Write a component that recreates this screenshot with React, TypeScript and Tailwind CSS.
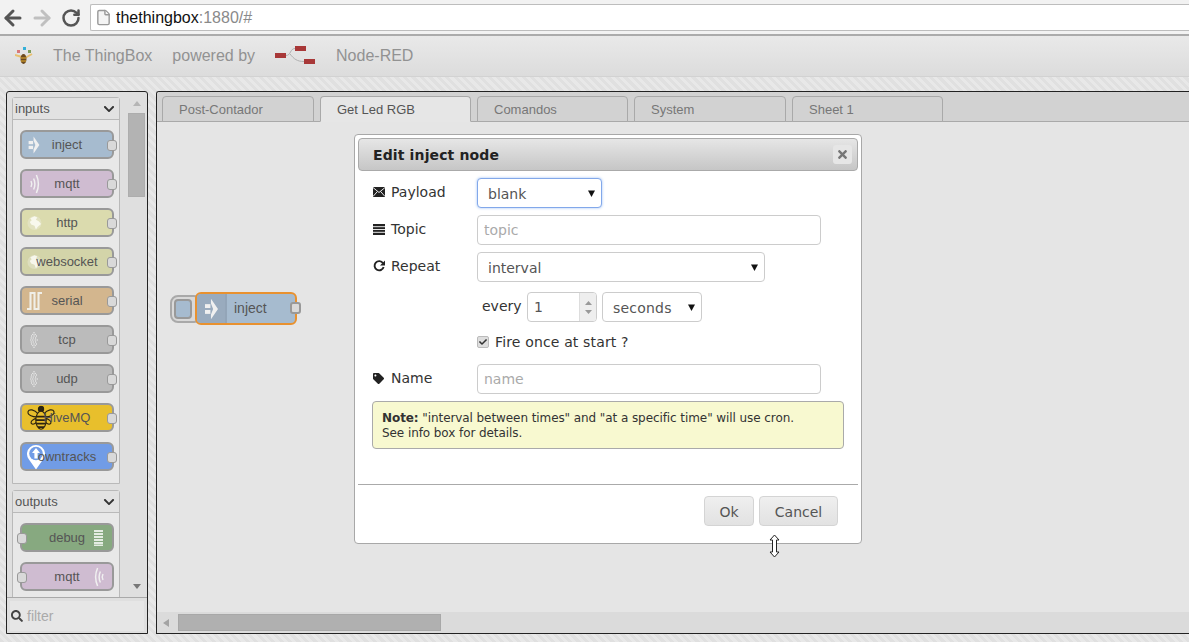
import React from "react";
import { ArrowLeft, ArrowRight, RotateCw, File } from "lucide-react";
import { FaChevronDown, FaSearch, FaTimes, FaTag, FaCheck } from "react-icons/fa";

const ArrowIn = ({ w = 12, h = 18 }: { w?: number; h?: number }) => (
  <svg width={w} height={h} viewBox="0 0 12 20" fill="#f0f0f0">
    <rect x="0" y="5.5" width="5" height="3.6" />
    <rect x="0" y="10.9" width="5" height="3.6" />
    <path d="M5.5 0.5 L12 10 L5.5 19.5 L5.5 15 L7.5 10 L5.5 5 Z" />
  </svg>
);
const Wave = ({ flip }: { flip?: boolean }) => (
  <svg width="10" height="20" viewBox="0 0 10 20" fill="none" stroke="#f0f0f0" strokeWidth="1.5" style={flip ? { transform: "scaleX(-1)" } : undefined}>
    <path d="M1 7 Q2.6 10 1 13" />
    <path d="M3.6 4.5 Q6.2 10 3.6 15.5" />
    <path d="M6.4 1 Q10.4 10 6.4 19" />
  </svg>
);
const Globe = () => (
  <svg width="15" height="15" viewBox="0 0 16 16">
    <circle cx="8" cy="8" r="7.5" fill="#f2f2e6" opacity="0.35" />
    <path d="M3.5 3 L8 0.8 L11 2 L9.5 4.5 L12.5 6 L15 9 L11.5 12 L9.5 15 L8 11 L4.5 9.5 L3 7 L5 5 Z" fill="#fbfbf4" opacity="0.85" />
  </svg>
);
const Serial = () => (
  <svg width="15" height="18" viewBox="0 0 15 18" fill="none" stroke="#f0efe8" strokeWidth="2.1">
    <path d="M0 17 H3.5 V1 H7.5 V17 H11.5 V1 H15" />
  </svg>
);
const Dots = () => (
  <svg width="8" height="18" viewBox="0 0 10 20" fill="#eeeeee">
    {[[5,1],[3.5,3],[6.5,3],[2,5],[5,5],[8,5],[1.5,7.5],[4,7.5],[7,7.5],[1,10],[3.5,10],[6.5,10],[9,10],[1.5,12.5],[4,12.5],[7,12.5],[2,15],[5,15],[8,15],[3.5,17],[6.5,17],[5,19]].map(([x,y],i)=>(
      <circle key={i} cx={x} cy={y} r="0.85" />
    ))}
  </svg>
);
const Bee = () => (
  <svg width="32" height="25" viewBox="0 0 32 29" fill="none" stroke="#2c2410" strokeWidth="1.3">
    <path d="M13 10 C8 4 2 4 1 7 C0 11 7 14 13 13 Z" />
    <path d="M19 10 C24 4 30 4 31 7 C32 11 25 14 19 13 Z" />
    <path d="M12 15 C7 15 3 19 5 21 C7 23 11 20 13 17 Z" />
    <path d="M20 15 C25 15 29 19 27 21 C25 23 21 20 19 17 Z" />
    <circle cx="16" cy="4" r="3" fill="#2c2410" />
    <ellipse cx="16" cy="17" rx="6" ry="10.5" fill="#e8bf2c" />
    <path d="M10.5 13 H21.5 M10 17 H22 M10.5 21 H21.5 M12.5 25 H19.5" strokeWidth="2" />
  </svg>
);
const Pin = () => (
  <svg width="18" height="25" viewBox="0 0 18 25">
    <path d="M9 25 L1.6 14.5 A9 9 0 1 1 16.4 14.5 Z" fill="#ffffff" />
    <circle cx="9" cy="9" r="6.8" fill="#719ce6" />
    <path d="M9 3.5 L13 8.5 H10.6 V14 H7.4 V8.5 H5 Z" fill="#ffffff" />
  </svg>
);
const Logo = () => (
  <svg width="18" height="18" viewBox="0 0 18 18">
    <rect x="8" y="0" width="3" height="3" fill="#35b0d8" />
    <rect x="2" y="3" width="3" height="3" fill="#d97878" />
    <rect x="13" y="3" width="3" height="3" fill="#7c9c58" />
    <path d="M0 8 L7 10 M17 7 L10 11" stroke="#e8c070" strokeWidth="2" />
    <ellipse cx="8.5" cy="12" rx="3" ry="5" fill="#6b4a20" />
    <path d="M6 11 H11 M6 14 H11" stroke="#e8b030" strokeWidth="1" />
  </svg>
);
const NodeRed = () => (
  <svg width="41" height="20" viewBox="0 0 41 20">
    <rect x="0" y="7" width="11" height="5" fill="#a83838" />
    <rect x="20" y="0" width="11" height="5" fill="#a83838" />
    <rect x="29" y="13" width="11" height="5" fill="#a83838" />
    <path d="M11 9.5 C16 9.5 15 2.5 20 2.5 M15 8 C19 13 22 15.5 29 15.5" fill="none" stroke="#b0b0b0" strokeWidth="1" />
  </svg>
);
const Envelope = () => (
  <svg width="12" height="10" viewBox="0 0 12 10">
    <rect width="12" height="10" fill="#222" />
    <path d="M0 0.5 L6 5.5 L12 0.5 M0 9.5 L4.4 4.5 M12 9.5 L7.6 4.5" stroke="#fff" strokeWidth="0.9" fill="none" />
  </svg>
);
const ListIcon = () => (
  <svg width="12" height="11" viewBox="0 0 12 11">
    <rect width="12" height="11" fill="#222" />
    <path d="M0 2.7 H12 M0 5.5 H12 M0 8.3 H12" stroke="#fff" strokeWidth="0.9" />
  </svg>
);
const Repeat = () => (
  <svg width="12" height="12" viewBox="0 0 12 12" fill="none">
    <path d="M10 3.2 A4.6 4.6 0 1 0 10.6 7" stroke="#222" strokeWidth="1.9" />
    <path d="M12 0.4 V5.4 H7 Z" fill="#222" />
  </svg>
);
const Caret = () => (
  <svg width="7" height="7" viewBox="0 0 7 7" className="shrink-0 mb-[2px]"><path d="M0 0.5 H7 L3.5 7 Z" fill="#111" /></svg>
);
const Cursor = () => (
  <svg width="11" height="24" viewBox="0 0 11 24" fill="#fff" stroke="#222" strokeWidth="1">
    <path d="M5.5 1 L10 6 H7.5 V18 H10 L5.5 23 L1 18 H3.5 V6 H1 Z" />
  </svg>
);

type N = { label: string; color: string; icon?: React.ReactNode; right?: boolean };

function PNode({ label, color, icon, right }: N) {
  return (
    <div className={`relative w-[94px] h-[29px] mt-[10px] first:mt-0 rounded-[6px] border-2 border-[#999999] flex items-center justify-center ${color}`}>
      {icon && (
        <span className={`absolute top-1/2 -translate-y-1/2 flex ${right ? "right-[8px]" : "left-[5px]"}`}>{icon}</span>
      )}
      <span className="relative text-[13px] text-[#555555]">{label}</span>
      <span className={`absolute top-[8px] w-[10px] h-[11px] rounded-[3px] bg-[#d9d9d9] border border-[#999999] ${right ? "left-[-5px]" : "right-[-5px]"}`} />
    </div>
  );
}

function Category({ title, children }: { title: string; children: React.ReactNode }) {
  return (
    <div className="w-[108px] shrink-0 border border-[#b9b9b9] rounded-t-[3px]">
      <div className="h-[22px] flex items-center justify-between pl-[2px] pr-[4px] border-b border-[#b9b9b9] bg-[#e2e2e2] text-[13px] text-[#555555]">
        <span>{title}</span>
        <FaChevronDown className="text-[12px] text-[#333333]" />
      </div>
      <div className="bg-[#e8e8e8] pt-[10px] pb-[12px] pl-[7px] flex flex-col">{children}</div>
    </div>
  );
}

function Tab({ label, active, w }: { label: string; active?: boolean; w: string }) {
  return (
    <div className={`${w} h-[26px] rounded-t-[4px] border border-[#a9a9a9] flex items-center pl-[16px] pt-[1px] text-[13px] ${active ? "bg-[#e6e6e6] border-b-[#e6e6e6] text-[#555555] relative z-10" : "bg-[#d2d2d2] text-[#777777]"}`}>
      {label}
    </div>
  );
}

const fieldBox = "border border-[#cccccc] rounded-[4px] bg-white text-[14px] text-[#555555] flex items-center";

function Label({ icon, text }: { icon: React.ReactNode; text: string }) {
  return (
    <div className="w-[104px] shrink-0 flex items-center text-[14px] text-[#333333] leading-[20px] pb-[2px]">
      <span className="w-[18px] flex">{icon}</span>
      {text}
    </div>
  );
}

export default function App() {
  return (
    <div className="relative w-[1189px] h-[642px] overflow-hidden flex flex-col font-['Liberation_Sans',Arial,sans-serif] bg-[#e4e4e4]">
      {/* Browser chrome */}
      <div className="h-[36px] shrink-0 bg-[#f2f2f2] border-b-2 border-[#ababab] flex items-start pt-[4px] pl-[1px]">
        <div className="flex items-center h-[27px] w-[89px]">
          <ArrowLeft size={24} strokeWidth={3} className="text-[#555555]" />
          <ArrowRight size={24} strokeWidth={3} className="text-[#c0c0c0] ml-[5px]" />
          <RotateCw size={20} strokeWidth={3} className="text-[#555555] ml-[7px]" />
        </div>
        <div className="flex-1 h-[27px] bg-white border border-[#bdbdbd] border-r-0 rounded-l-[2px] flex items-center pl-[4px] text-[16px]">
          <File size={17} className="text-[#999999] fill-[#f4f4f4] mr-[4px]" />
          <span className="text-[#111111]">thethingbox</span>
          <span className="text-[#8a8a8a]">:1880/#</span>
        </div>
      </div>

      {/* App header */}
      <div className="h-[41px] shrink-0 bg-gradient-to-b from-[#e9e9e9] to-[#dcdcdc] border-b border-[#d2d2d2] flex items-center pl-[15px] text-[16px] text-[#929292]">
        <Logo />
        <span className="ml-[20px]">The ThingBox</span>
        <span className="ml-[20px]">powered by</span>
        <span className="ml-[20px] flex"><NodeRed /></span>
        <span className="ml-[20px]">Node-RED</span>
      </div>

      {/* Body */}
      <div className="flex-1 min-h-0 flex gap-[8px] pl-[6px] pt-[14px] pb-[8px] bg-[repeating-linear-gradient(45deg,#e0e0e0_0,#e0e0e0_3px,#e8e8e8_3px,#e8e8e8_6px)]">
        {/* Palette */}
        <div className="w-[142px] shrink-0 flex flex-col border border-[#222222] rounded-t-[3px] bg-[#dfdfdf] overflow-hidden">
          <div className="flex-1 min-h-0 flex overflow-hidden">
            <div className="w-[117px] shrink-0 flex flex-col pl-[5px] pt-[5px] gap-[6px] overflow-visible">
              <Category title="inputs">
                <PNode label="inject" color="bg-[#a6bbcf]" icon={<span className="block ml-[1px]"><ArrowIn /></span>} />
                <PNode label="mqtt" color="bg-[#cfbcd1]" icon={<span className="block ml-[3px]"><Wave /></span>} />
                <PNode label="http" color="bg-[#dbdbae]" icon={<Globe />} />
                <PNode label="websocket" color="bg-[#d3d4a9]" icon={<Globe />} />
                <PNode label="serial" color="bg-[#d3b68e]" icon={<Serial />} />
                <PNode label="tcp" color="bg-[#bbbbbb]" icon={<span className="block ml-[3px]"><Dots /></span>} />
                <PNode label="udp" color="bg-[#bbbbbb]" icon={<span className="block ml-[3px]"><Dots /></span>} />
                <PNode label="HiveMQ" color="bg-[#e8bf2c]" icon={<span className="block ml-[-2px]"><Bee /></span>} />
                <PNode label="owntracks" color="bg-[#719ce6]" icon={<Pin />} />
              </Category>
              <Category title="outputs">
                <PNode label="debug" color="bg-[#87a980]" icon={
                  <svg width="10" height="16" viewBox="0 0 10 16" fill="#e4ece2"><rect y="0" width="9" height="2"/><rect y="3" width="9" height="2"/><rect y="6" width="9" height="2"/><rect y="9" width="9" height="2"/><rect y="12" width="9" height="2"/><rect y="14.5" width="9" height="1.5"/></svg>
                } right />
                <PNode label="mqtt" color="bg-[#cfbcd1]" icon={<Wave flip />} right />
              </Category>
            </div>
            <div className="flex-1 flex flex-col items-center pl-[4px] pr-[2px]">
              <svg width="8" height="5" viewBox="0 0 8 5" className="mt-[9px]"><path d="M4 0 L8 5 H0 Z" fill="#b5b5b5" /></svg>
              <div className="w-[17px] h-[84px] mt-[7px] bg-[#b3b3b3] border border-[#adadad]" />
              <div className="flex-1" />
              <svg width="8" height="5" viewBox="0 0 8 5" className="mb-[8px]"><path d="M0 0 H8 L4 5 Z" fill="#777777" /></svg>
            </div>
          </div>
          <div className="h-[36px] shrink-0 border-t border-[#a9a9a9] px-[3px] pt-[3px]">
            <div className="h-[30px] bg-[#e6e6e6] flex items-center pl-[1px] text-[14px] text-[#aaaaaa]">
              <FaSearch className="text-[12px] text-[#444444] mr-[4px]" />
              filter
            </div>
          </div>
        </div>

        {/* Workspace */}
        <div className="flex-1 min-w-0 flex flex-col border border-r-0 border-[#222222] rounded-tl-[3px] overflow-hidden">
          <div className="h-[30px] shrink-0 bg-[#d2d2d2] border-b border-[#a9a9a9] flex items-end pl-[5px]">
            <div className="flex items-end gap-[6px] translate-y-[1px]">
              <Tab label="Post-Contador" w="w-[152px]" />
              <Tab label="Get Led RGB" active w="w-[151px]" />
              <Tab label="Comandos" w="w-[151px]" />
              <Tab label="System" w="w-[152px]" />
              <Tab label="Sheet 1" w="w-[151px]" />
            </div>
          </div>
          <div className="relative flex-1 min-h-0 bg-[#e5e5e5]">
            {/* Button of the inject node on canvas */}
            <div className="absolute left-[13px] top-[173px] w-[32px] h-[28px] rounded-[8px] border-2 border-[#a9a9a9] bg-[#d9d9d9] p-[2px] pr-[8px]">
              <div className="w-[18px] h-[20px] rounded-[4px] border-2 border-[#999999] bg-[#a6bbcf]" />
            </div>
            {/* Inject node on canvas */}
            <div className="absolute left-[38px] top-[170px] w-[102px] h-[33px] rounded-[6px] border-2 border-[#e8912f] bg-[#a6bbcf] flex items-stretch">
              <div className="w-[30px] shrink-0 bg-[#99abbe] border-r-2 border-[#93a5b8] rounded-l-[4px] flex items-center justify-center">
                <ArrowIn w={13} h={24} />
              </div>
              <div className="flex-1 flex items-center pl-[7px] text-[14px] text-[#555555]">inject</div>
              <span className="absolute top-[8px] right-[-6px] w-[11px] h-[12px] rounded-[3px] bg-[#d9d9d9] border-2 border-[#999999]" />
            </div>
          </div>
          <div className="h-[21px] shrink-0 bg-[#dbdbdb] flex items-center">
            <svg width="6" height="8" viewBox="0 0 6 8" className="ml-[6px]"><path d="M6 0 V8 L0 4 Z" fill="#a3a3a3" /></svg>
            <div className="w-[263px] h-[17px] ml-[9px] bg-[#b0b0b0] border border-[#a8a8a8]" />
          </div>
        </div>
      </div>

      {/* Dialog */}
      <div className="absolute left-[354px] top-[134px] w-[508px] h-[410px] bg-white border border-[#a8a8a8] rounded-[4px] p-[3px] font-['DejaVu_Sans',Verdana,sans-serif]">
        <div className="h-[33px] rounded-[4px] border border-[#aaaaaa] bg-gradient-to-b from-[#e6e6e6] to-[#c6c6c6] flex items-center justify-between pl-[14px] pr-[5px]">
          <span className="text-[14px] font-bold text-[#222222] tracking-[0.13px] pt-[2px]">Edit inject node</span>
          <span className="w-[19px] h-[19px] rounded-[3px] bg-[#e6e6e6] flex items-center justify-center">
            <FaTimes className="text-[13px] text-[#777777]" />
          </span>
        </div>
        <div className="pl-[15px] flex flex-col">
          <div className="flex items-center h-[30px] mt-[7px]">
            <Label icon={<Envelope />} text="Payload" />
            <div className="w-[125px] h-[30px] rounded-[4px] border border-[#82a8ea] shadow-[0_0_3px_#9ec0f5] bg-white text-[14px] text-[#555555] flex items-center justify-between pl-[10px] pr-[6px] pt-[2px]">
              blank <Caret />
            </div>
          </div>
          <div className="flex items-center h-[30px] mt-[7px]">
            <Label icon={<ListIcon />} text="Topic" />
            <input readOnly placeholder="topic" className={`${fieldBox} w-[344px] h-[30px] px-[6px] placeholder:text-[#aaaaaa] outline-none`} />
          </div>
          <div className="flex items-center h-[30px] mt-[7px]">
            <Label icon={<Repeat />} text="Repeat" />
            <div className={`${fieldBox} w-[288px] h-[30px] justify-between pl-[10px] pr-[6px] pt-[2px]`}>
              interval <Caret />
            </div>
          </div>
          <div className="flex items-center h-[30px] mt-[10px] pl-[109px]">
            <span className="text-[14px] text-[#333333] w-[45px] pb-[2px]">every</span>
            <div className={`${fieldBox} w-[70px] h-[30px] justify-between pl-[6px] overflow-hidden text-[#333333]`}>
              1
              <span className="w-[17px] h-full bg-[#eeeeee] border-l border-[#dddddd] flex flex-col items-center justify-center gap-[5px]">
                <svg width="7" height="4" viewBox="0 0 7 4"><path d="M3.5 0 L7 4 H0 Z" fill="#999999" /></svg>
                <svg width="7" height="4" viewBox="0 0 7 4"><path d="M0 0 H7 L3.5 4 Z" fill="#999999" /></svg>
              </span>
            </div>
            <div className={`${fieldBox} w-[100px] h-[30px] ml-[5px] justify-between pl-[10px] pr-[6px] pt-[2px] tracking-[0.2px]`}>
              seconds <Caret />
            </div>
          </div>
          <div className="flex items-center h-[14px] mt-[13px] pl-[104px]">
            <span className="w-[12px] h-[12px] rounded-[2px] bg-[#dedede] border border-[#bbbbbb] flex items-center justify-center">
              <FaCheck className="text-[8px] text-[#333333]" />
            </span>
            <span className="ml-[6px] text-[14px] text-[#333333] tracking-[0.15px]">Fire once at start ?</span>
          </div>
          <div className="flex items-center h-[30px] mt-[15px]">
            <Label icon={<FaTag className="text-[11px] text-[#222222]" />} text="Name" />
            <input readOnly placeholder="name" className={`${fieldBox} w-[344px] h-[30px] px-[6px] placeholder:text-[#aaaaaa] outline-none`} />
          </div>
          <div className="w-[472px] h-[48px] mt-[7px] ml-[-1px] rounded-[4px] border border-[#aaaaaa] bg-[#f8f9d0] pl-[9px] pt-[9px] text-[12px] leading-[15px] text-[#333333] tracking-[-0.08px]">
            <b>Note:</b> "interval between times" and "at a specific time" will use cron.
            <br />
            See info box for details.
          </div>
        </div>
        <div className="h-px bg-[#aaaaaa] mt-[35px]" />
        <div className="flex justify-end gap-[5px] pr-[20px] mt-[11px]">
          <div className="w-[50px] h-[30px] pt-[2px] rounded-[4px] border border-[#d4d4d4] bg-gradient-to-b from-[#efefef] to-[#e2e2e2] flex items-center justify-center text-[14px] text-[#555555]">Ok</div>
          <div className="w-[79px] h-[30px] pt-[2px] rounded-[4px] border border-[#d4d4d4] bg-gradient-to-b from-[#efefef] to-[#e2e2e2] flex items-center justify-center text-[14px] text-[#555555]">Cancel</div>
        </div>
      </div>

      <div className="absolute left-[769px] top-[534px]"><Cursor /></div>
    </div>
  );
}
